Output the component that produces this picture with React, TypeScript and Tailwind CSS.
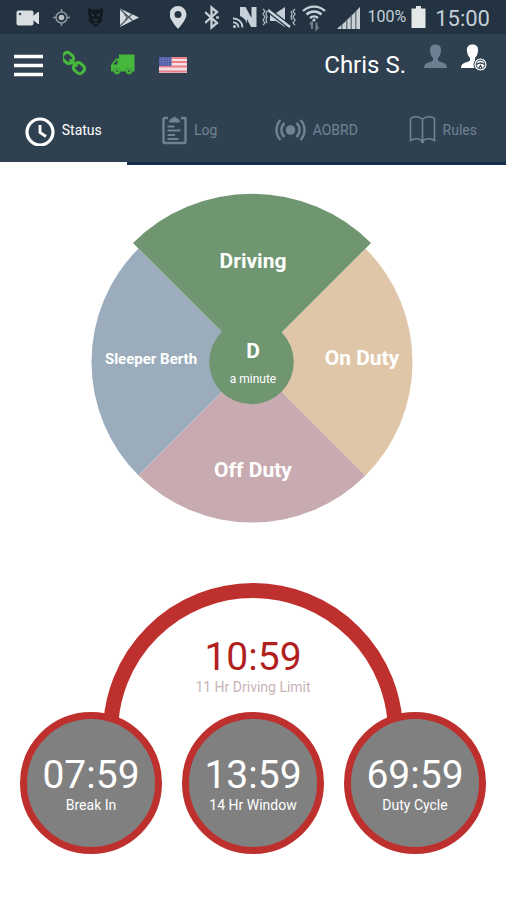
import type { ReactNode } from "react";

const ROBOTO = "font-[Roboto,'Liberation_Sans',sans-serif]";

type GlyphProps = { width: number; height: number; children: ReactNode };

function Glyph({ width, height, children }: GlyphProps) {
  return (
    <svg
      width={width}
      height={height}
      viewBox={`0 0 ${width} ${height}`}
      fill="none"
      aria-hidden="true"
      className="shrink-0"
    >
      {children}
    </svg>
  );
}

function StatusBar() {
  return (
    <div className="flex h-[34px] items-center justify-between bg-[#233341] px-4 text-[#c5d0d8]">
      <div className="flex items-center gap-[13px]">
        <Glyph width={24} height={34}>
          <rect x="0.5" y="10.500" width="17" height="15" rx="2" fill="#d9dee0" />
          <path d="M17 16l5-4h1v12h-1l-5-4z" fill="#d9dee0" />
          <circle cx="4" cy="14" r="1.300" fill="#34444f" />
        </Glyph>
        <Glyph width={18} height={34}>
          <circle cx="8.500" cy="17.500" r="5.500" stroke="#8b989f" strokeWidth="1.500" />
          <circle cx="8.500" cy="17.500" r="2.800" fill="#b8c0c3" />
          <path d="M8.500 9v3M8.500 23v3M0 17.500h3M14 17.500h3" stroke="#8b989f" strokeWidth="1.500" />
        </Glyph>
        <Glyph width={22} height={34}>
          <path d="M4.500 7l3 2.500h8l3-2.500.5 7-1 3 .5 4-3 2.500-4 3.500-4-3.500-3-2.500.5-4-1-3z" fill="#121b23" />
          <path d="M7 14l3 2M16 14l-3 2M9 20h5M10 23h3" stroke="#30404d" strokeWidth="1.200" />
        </Glyph>
        <Glyph width={20} height={34}>
          <path d="M1 8.500l19 9-19 9.500z" fill="#d3dadd" />
          <path d="M1 9l13 12M1 26l12-12M5 13.500l3 4-3 5" stroke="#4b5b66" strokeWidth="1.200" />
        </Glyph>
      </div>
      <div className="flex items-center gap-1">
        <Glyph width={31} height={34}>
          <path
            fillRule="evenodd"
            d="M8 6a8.500 8.500 0 0 0-8.500 8.500C-.5 20 8 29 8 29s8.500-9 8.500-14.500A8.500 8.500 0 0 0 8 6zm0 5a3.500 3.500 0 1 1 0 7 3.500 3.500 0 0 1 0-7z"
            fill="#d3dbe0"
          />
        </Glyph>
        <Glyph width={24} height={34}>
          <path d="M0 12l12 11-5.500 4.500V7.500L12 12 0 23" stroke="#c5d0d8" strokeWidth="2.300" />
          <path d="M11 17.500h3" stroke="#c5d0d8" strokeWidth="2.200" />
        </Glyph>
        <Glyph width={25} height={34}>
          <path d="M7 7h5.500l6 11V7h5v20H18l-4-8v4.500A12 12 0 0 0 7 16z" fill="#c5d0d8" />
          <path d="M0 18.500a9 9 0 0 1 9.500 9M0 22.500a5 5 0 0 1 5.500 5" stroke="#c5d0d8" strokeWidth="1.800" />
          <circle cx="1.500" cy="26.500" r="1.500" fill="#c5d0d8" />
        </Glyph>
        <Glyph width={36} height={34}>
          <path d="M8 13h6l9-6v20l-9-6H8z" fill="#c5d0d8" />
          <path d="M6 10l22 17" stroke="#233341" strokeWidth="5" />
          <path d="M6 10l22 17" stroke="#c5d0d8" strokeWidth="2.600" />
          <path
            d="M1 9l2 2-2 3 2 3-2 3 2 3-2 2M5 11l-1 3 1 3-1 3 1 3M33 9l-2 2 2 3-2 3 2 3-2 3 2 2M29 11l1 3-1 3 1 3"
            stroke="#aab7c0"
            strokeWidth="1.300"
          />
        </Glyph>
        <Glyph width={30} height={34}>
          <path
            d="M1 11a16 16 0 0 1 22 0M4.500 14.500a11 11 0 0 1 15 0M8 18a6 6 0 0 1 8 0"
            stroke="#c5d0d8"
            strokeWidth="2.400"
          />
          <circle cx="12" cy="20" r="1.600" fill="#c5d0d8" />
          <path d="M10 29v-6.500l-2 2M14.500 22.500v6.500l2-2" stroke="#6f7d88" strokeWidth="2.200" />
        </Glyph>
        <Glyph width={28} height={34}>
          <path
            d="M1 29l4-3.500V29zM6.500 24.500l3.500-3V29H6.500zM11.500 20l3-3v12h-3zM16 15.500l3-3V29h-3zM20.500 11l3.500-4v22h-3.500z"
            fill="#c9d1d5"
          />
          <path d="M1 29L24 7v22z" fill="#c9d1d5" opacity="0.450" />
        </Glyph>
        <span className="text-base leading-6">100%</span>
        <Glyph width={21} height={34}>
          <path d="M6 6h5v2.500h4.500V28h-14V8.500H6z" fill="#e4e8e8" />
        </Glyph>
        <span className="pt-1 text-[22px] leading-8">15:00</span>
      </div>
    </div>
  );
}

function UsFlag() {
  return (
    <Glyph width={28} height={62}>
      <rect y="23" width="28" height="16" fill="#f3dfe3" />
      <path d="M0 24h28M0 28h28M0 32.500h28M0 37.500h28" stroke="#ea7f88" strokeWidth="2.200" />
      <rect y="23" width="12.500" height="9" fill="#5560a8" />
      <path d="M1.500 25h10M1.500 27.500h10M1.500 30h10" stroke="#8d94c6" strokeDasharray="1 1.500" />
    </Glyph>
  );
}

function AppBar() {
  return (
    <div className="flex h-[62px] items-center justify-between pr-[19px] pl-[14px]">
      <div className="flex items-center gap-5">
        <button type="button" aria-label="Menu">
          <Glyph width={29} height={62}>
            <path d="M0 22.500h29M0 31.500h29M0 40.500h29" stroke="#fff" strokeWidth="3.500" />
          </Glyph>
        </button>
        <button type="button" aria-label="Device link">
          <Glyph width={24} height={62}>
            <g transform="translate(10.500 29) rotate(43)" stroke="#46b83c" strokeWidth="3">
              <rect x="-13" y="-4.500" width="11" height="9" rx="3.500" />
              <rect x="2" y="-4.500" width="11" height="9" rx="3.500" />
              <path d="M-5 0H5" />
            </g>
          </Glyph>
        </button>
        <button type="button" aria-label="Vehicle">
          <Glyph width={32} height={62}>
            <path
              fillRule="evenodd"
              d="M12 20.500h15.500v17H5a1 1 0 0 1-1-1V31l5-6.500h3zM10.500 26.500H9.300l-3 4h4.200z"
              fill="#46b83c"
            />
            <circle cx="10" cy="37" r="3.200" fill="#46b83c" stroke="#3c8f3a" strokeWidth="0.800" />
            <circle cx="22" cy="37" r="3.200" fill="#46b83c" stroke="#3c8f3a" strokeWidth="0.800" />
            <circle cx="10" cy="37" r="0.900" fill="#2f4151" />
            <circle cx="22" cy="37" r="0.900" fill="#2f4151" />
          </Glyph>
        </button>
        <button type="button" aria-label="Country: United States">
          <UsFlag />
        </button>
      </div>
      <div className="flex items-center gap-[14px]">
        <span className="text-2xl text-white">Chris S.</span>
        <button type="button" aria-label="Driver">
          <Glyph width={27} height={62}>
            <path
              d="M15.500 10.500c4 0 6 2.500 5.500 6.500-.3 3.500-1.500 5.500-3 7v2.500c2 2 9 1.500 9 7.500H4c0-6 7-5.500 9-7.500V24c-1.500-1.500-2.700-3.500-3-7-.5-4 1.500-6.500 5.500-6.500z"
              fill="#6d8091"
            />
          </Glyph>
        </button>
        <button type="button" aria-label="Co-driver">
          <Glyph width={26} height={62}>
            <path
              d="M11.500 10.500c4 0 6 2.500 5.500 6.500-.3 3.500-1.500 5.500-3 7v2.500c2 2 9 1.500 9 7.500H0c0-6 7-5.500 9-7.500V24c-1.500-1.500-2.700-3.500-3-7-.5-4 1.500-6.500 5.500-6.500z"
              fill="#fff"
            />
            <circle cx="19.500" cy="30.500" r="6.500" fill="#fff" stroke="#2f4151" />
            <circle cx="19.500" cy="30.500" r="4.300" stroke="#5a6772" strokeWidth="1.200" />
            <path d="M15.500 30.500q4-3 8 0M18 34l1.500-2.500L21 34" stroke="#2f4151" strokeWidth="1.300" />
          </Glyph>
        </button>
      </div>
    </div>
  );
}

const tabs: { label: string; active: boolean; icon: ReactNode }[] = [
  {
    label: "Status",
    active: true,
    icon: (
      <Glyph width={30} height={32}>
        <circle cx="15" cy="18" r="13" stroke="currentColor" strokeWidth="3.200" />
        <path d="M15 11V18.500l6 4" stroke="currentColor" strokeWidth="2.800" />
      </Glyph>
    ),
  },
  {
    label: "Log",
    active: false,
    icon: (
      <Glyph width={25} height={32}>
        <path d="M6 4H2.500A1 1 0 0 0 1.500 5v23a1 1 0 0 0 1 1h20a1 1 0 0 0 1-1V5a1 1 0 0 0-1-1H19" stroke="currentColor" strokeWidth="2.400" />
        <path d="M7.500 8q0-3 3-3.500a2.200 2.200 0 0 1 4 0q3 .5 3 3.500z" fill="currentColor" stroke="currentColor" />
        <path d="M5.500 12.500h7M5.500 16.500h13M5.500 21h7.500M5.500 25h11" stroke="currentColor" strokeWidth="2.200" />
      </Glyph>
    ),
  },
  {
    label: "AOBRD",
    active: false,
    icon: (
      <Glyph width={31} height={32}>
        <circle cx="15.500" cy="16" r="4.800" fill="currentColor" />
        <path
          d="M9.500 9a9.500 9.500 0 0 0 0 14M21.500 9a9.500 9.500 0 0 1 0 14M5.500 6a14.500 14.500 0 0 0 0 20M25.500 6a14.500 14.500 0 0 1 0 20"
          stroke="currentColor"
          strokeWidth="2.400"
        />
      </Glyph>
    ),
  },
  {
    label: "Rules",
    active: false,
    icon: (
      <Glyph width={27} height={32}>
        <path
          d="M13.500 5C10 2 4 2 1.500 4.500v22c3.500-2.500 9-2.500 12 .5 3-3 8.500-3 12-.5v-22C23 2 17 2 13.500 5zM13.500 5v22"
          stroke="currentColor"
          strokeWidth="1.600"
        />
        <circle cx="13.500" cy="27.500" r="1.800" fill="currentColor" />
      </Glyph>
    ),
  },
];

function TabBar() {
  return (
    <nav className="grid grid-cols-4">
      {tabs.map((tab) => (
        <button
          key={tab.label}
          type="button"
          aria-current={tab.active ? "page" : undefined}
          className={
            tab.active
              ? "flex h-[69px] items-center justify-center gap-[7px] border-b-3 border-white pt-px text-sm text-white"
              : "flex h-[69px] items-center justify-center gap-[7px] border-b-3 border-[#12304b] pt-px text-sm text-[#708393]"
          }
        >
          {tab.icon}
          {tab.label}
        </button>
      ))}
    </nav>
  );
}

function DutyWheel() {
  return (
    <section aria-label="Duty status" className="relative mx-auto h-[330px] w-[324px]">
      <svg viewBox="0 0 324 330" className="h-full w-full" aria-hidden="true">
        <path d="M161 169L47.500 282.500A160.500 160.500 0 0 1 47.500 55.500z" fill="#9badbc" />
        <path d="M161 169L274.500 55.500A160.500 160.500 0 0 1 274.500 282.500z" fill="#e0c6a8" />
        <path d="M161 169L274.500 282.500A160.500 160.500 0 0 1 47.500 282.500z" fill="#c8abb0" />
        <path d="M161 169L42 50A168.300 168.300 0 0 1 280 50z" fill="#6f9670" />
        <circle cx="160.500" cy="169" r="42.300" fill="#6f9670" />
      </svg>
      <div className="absolute inset-0 flex flex-col font-bold text-white">
        <button type="button" className="h-[138px] text-[21px]">
          Driving
        </button>
        <div className="grid h-[68px] grid-cols-[1fr_84px_1fr]">
          <button type="button" className="pb-3 text-[15px]">
            Sleeper Berth
          </button>
          <p className="flex flex-col items-center justify-center">
            <span className="text-[21px] leading-7">D</span>
            <span className="text-xs leading-7 font-normal">a minute</span>
          </p>
          <button type="button" className="pb-3 pl-[14px] text-[21px]">
            On Duty
          </button>
        </div>
        <button type="button" className="flex-1 pt-5 text-[21px]">
          Off Duty
        </button>
      </div>
    </section>
  );
}

const clocks = [
  { time: "07:59", label: "Break In" },
  { time: "13:59", label: "14 Hr Window" },
  { time: "69:59", label: "Duty Cycle" },
];

function HoursOfService() {
  return (
    <section aria-label="Hours of service" className="mx-auto w-[466px]">
      <div className="relative mx-auto h-[129px] w-[300px] pt-[52px] text-center">
        <svg viewBox="0 0 300 138" className="absolute top-0 left-0 h-[138px] w-full" aria-hidden="true">
          <path d="M7.500 150a142.500 142.500 0 0 1 285 0" fill="none" stroke="#be302e" strokeWidth="15" />
        </svg>
        <p className="text-[39px] leading-[44px] text-[#b21f1f]">10:59</p>
        <p className="text-sm leading-4 text-[#c9b3b5]">11 Hr Driving Limit</p>
      </div>
      <div className="relative flex justify-between">
        {clocks.map((clock) => (
          <button
            key={clock.label}
            type="button"
            className="flex size-[142px] flex-col items-center justify-center rounded-full border-7 border-[#be302e] bg-[#808080] text-white"
          >
            <span className="text-[39px] leading-[44px]">{clock.time}</span>
            <span className="text-sm leading-4">{clock.label}</span>
          </button>
        ))}
      </div>
    </section>
  );
}

export default function App() {
  return (
    <div className={`min-h-screen bg-white ${ROBOTO}`}>
      <header className="bg-[#2f4151]">
        <StatusBar />
        <AppBar />
        <TabBar />
      </header>
      <main className="flex flex-col gap-[60px] pt-7">
        <DutyWheel />
        <HoursOfService />
      </main>
    </div>
  );
}
